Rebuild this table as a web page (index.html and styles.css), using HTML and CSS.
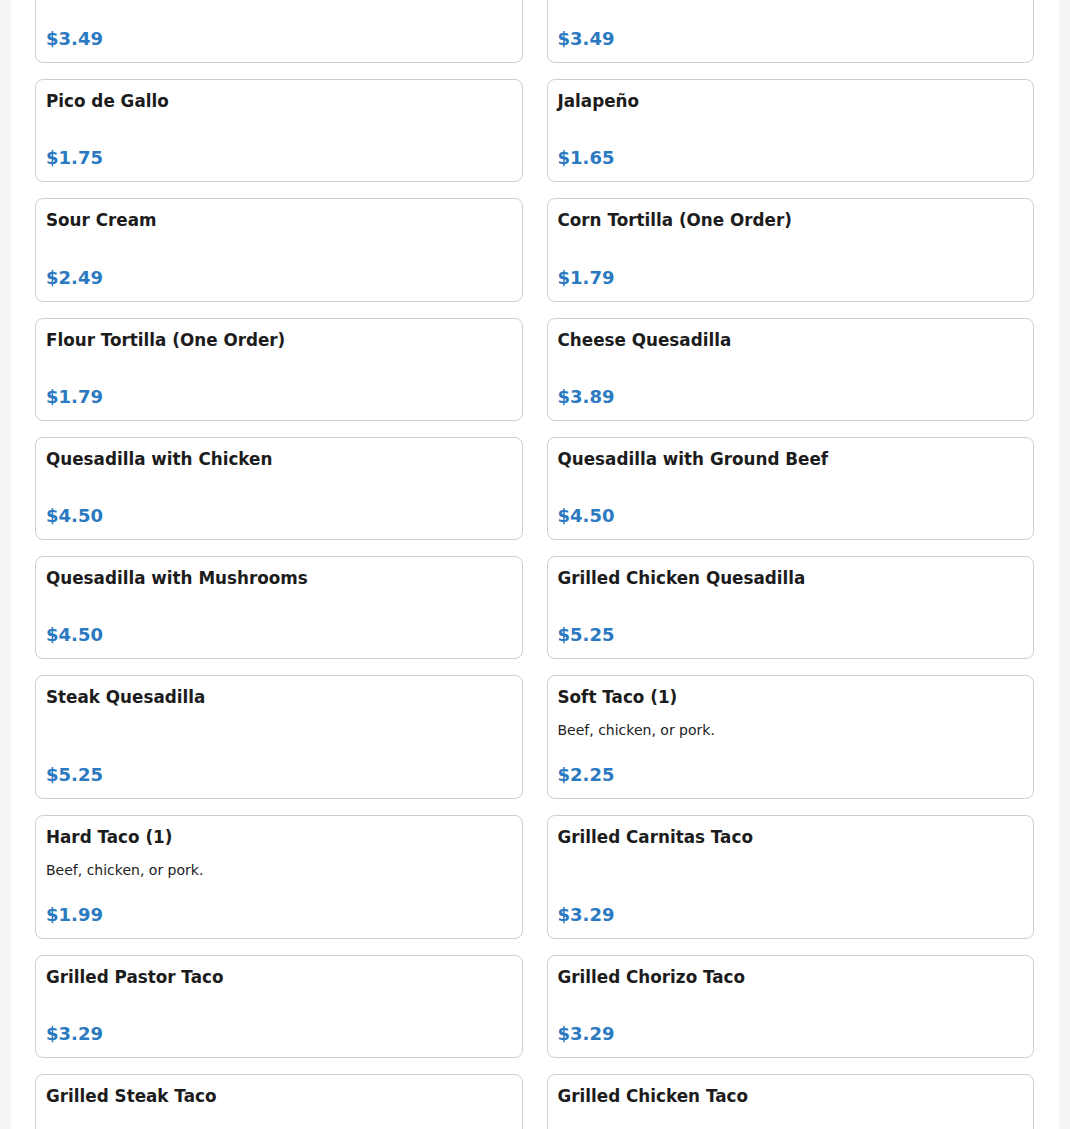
FILE: index.html
```html
<!DOCTYPE html>
<html lang="en">
<head>
<meta charset="utf-8">
<title>Menu</title>
<link rel="stylesheet" href="styles.css">
</head>
<body>
<main class="page">
  <section class="menu-grid">
    <article class="item"><h3 class="name">Guacamole</h3><div class="price">$3.49</div></article>
    <article class="item"><h3 class="name">Queso Dip</h3><div class="price">$3.49</div></article>
    <article class="item"><h3 class="name">Pico de Gallo</h3><div class="price">$1.75</div></article>
    <article class="item"><h3 class="name">Jalapeño</h3><div class="price">$1.65</div></article>
    <article class="item"><h3 class="name">Sour Cream</h3><div class="price">$2.49</div></article>
    <article class="item"><h3 class="name">Corn Tortilla (One Order)</h3><div class="price">$1.79</div></article>
    <article class="item"><h3 class="name">Flour Tortilla (One Order)</h3><div class="price">$1.79</div></article>
    <article class="item"><h3 class="name">Cheese Quesadilla</h3><div class="price">$3.89</div></article>
    <article class="item"><h3 class="name">Quesadilla with Chicken</h3><div class="price">$4.50</div></article>
    <article class="item"><h3 class="name">Quesadilla with Ground Beef</h3><div class="price">$4.50</div></article>
    <article class="item"><h3 class="name">Quesadilla with Mushrooms</h3><div class="price">$4.50</div></article>
    <article class="item"><h3 class="name">Grilled Chicken Quesadilla</h3><div class="price">$5.25</div></article>
    <article class="item"><h3 class="name">Steak Quesadilla</h3><div class="price">$5.25</div></article>
    <article class="item"><h3 class="name">Soft Taco (1)</h3><p class="desc">Beef, chicken, or pork.</p><div class="price">$2.25</div></article>
    <article class="item"><h3 class="name">Hard Taco (1)</h3><p class="desc">Beef, chicken, or pork.</p><div class="price">$1.99</div></article>
    <article class="item"><h3 class="name">Grilled Carnitas Taco</h3><div class="price">$3.29</div></article>
    <article class="item"><h3 class="name">Grilled Pastor Taco</h3><div class="price">$3.29</div></article>
    <article class="item"><h3 class="name">Grilled Chorizo Taco</h3><div class="price">$3.29</div></article>
    <article class="item"><h3 class="name">Grilled Steak Taco</h3><div class="price">$3.29</div></article>
    <article class="item"><h3 class="name">Grilled Chicken Taco</h3><div class="price">$3.29</div></article>
  </section>
</main>
</body>
</html>
```
FILE: styles.css
```css
html, body {
  margin: 0;
  padding: 0;
}

body {
  background: #f5f5f5;
  font-family: "DejaVu Sans", "Liberation Sans", sans-serif;
  color: #1e1e1e;
}

.page {
  box-sizing: border-box;
  max-width: 1048px;
  margin: 0 auto;
  padding: 0 25px 24px 24px;
  background: #ffffff;
  overflow: hidden;
}

/* page is shown scrolled: the first row is partly above the viewport */
.menu-grid {
  margin-top: -40px;
  display: grid;
  grid-template-columns: 1fr 1fr;
  column-gap: 24px;
  row-gap: 16px;
}

.item {
  display: flex;
  flex-direction: column;
  border: 1px solid #cfcfcf;
  border-radius: 8px;
  padding: 12px 10px 13px;
  background: #fff;
}

.name {
  margin: 0;
  font-size: 16.8px;
  font-weight: bold;
  line-height: 19.5px;
  color: #1c1c1c;
}

.desc {
  margin: 14.5px 0 0;
  font-size: 14px;
  line-height: 16px;
  color: #222;
}

.price {
  margin-top: auto;
  padding-top: 26px;
  font-size: 18px;
  font-weight: bold;
  line-height: 21px;
  color: #2b79c0;
}

.name + .price {
  padding-top: 35.7px;
}
```
